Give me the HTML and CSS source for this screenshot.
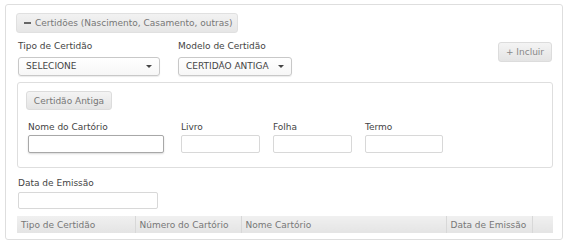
FILE: index.html
```html
<!DOCTYPE html>
<html>
    <head>
        <meta charset="utf-8">
        <title>Certidões</title>
        <link rel="stylesheet" href="styles.css">
    </head>
    <body>
    <div class="panel">
        <div class="legend"><span class="minus"></span>Certidões (Nascimento, Casamento, outras)</div>

        <div class="row1">
            <div class="field f-tipo">
                <label>Tipo de Certidão</label>
                <div class="select">SELECIONE<span class="caret"></span></div>
            </div>
            <div class="field f-modelo">
                <label>Modelo de Certidão</label>
                <div class="select">CERTIDÃO ANTIGA<span class="caret"></span></div>
            </div>
            <button class="btn incluir">+ Incluir</button>
        </div>

        <!--bloco da certidão antiga-->
        <div class="inner">
            <button class="btn tag">Certidão Antiga</button>
            <div class="row2">
                <div class="field f-nome">
                    <label>Nome do Cartório</label>
                    <input type="text" class="focus">
                </div>
                <div class="field f-livro">
                    <label>Livro</label>
                    <input type="text">
                </div>
                <div class="field f-folha">
                    <label>Folha</label>
                    <input type="text">
                </div>
                <div class="field f-termo">
                    <label>Termo</label>
                    <input type="text">
                </div>
            </div>
        </div>

        <div class="field f-data">
            <label>Data de Emissão</label>
            <input type="text">
        </div>

        <table class="grid">
            <tr>
                <th class="c1">Tipo de Certidão</th>
                <th class="c2">Número do Cartório</th>
                <th class="c3">Nome Cartório</th>
                <th class="c4">Data de Emissão</th>
                <th class="c5"></th>
            </tr>
        </table>
    </div>
    </body>
</html>
```

FILE: styles.css
```css
* {
    margin: 0;
    padding: 0;
    box-sizing: border-box;
}
body {
    background: #fff;
    font-family: "DejaVu Sans", Verdana, sans-serif;
    font-size: 9px;
    color: #333;
}
.panel {
    margin: 4px 0 0 5px;
    width: 558px;
    height: 236px;
    border: 1px solid #dedede;
    border-radius: 3px;
    padding: 8px 9px 0 11px;
}
.legend {
    display: inline-block;
    margin-left: -1px;
    height: 20px;
    line-height: 18px;
    padding: 0 7px;
    width: 222px;
    border: 1px solid #e0e0e0;
    border-radius: 3px;
    background: linear-gradient(#f2f2f2, #e6e6e6);
    color: #777;
    white-space: nowrap;
}
.minus {
    display: inline-block;
    width: 7px;
    height: 2px;
    background: #666;
    vertical-align: middle;
    margin: -1px 4px 0 0;
}
label {
    display: block;
    height: 11px;
    line-height: 11px;
    color: #444;
    white-space: nowrap;
}
.row1 {
    display: flex;
    margin-top: 8px;
}
.f-tipo {
    margin-left: 1px;
    width: 142px;
}
.f-modelo {
    margin-left: 18px;
    width: 114px;
}
.select {
    position: relative;
    margin-top: 5px;
    height: 19px;
    line-height: 17px;
    padding-left: 7px;
    border: 1px solid #c8c8c8;
    border-radius: 3px;
    background: linear-gradient(#fff, #f6f6f6);
    box-shadow: 0 1px 1px rgba(0,0,0,0.08);
    color: #444;
    white-space: nowrap;
}
.caret {
    position: absolute;
    right: 7px;
    top: 7px;
    border-left: 3px solid transparent;
    border-right: 3px solid transparent;
    border-top: 3px solid #444;
}
.btn {
    font-family: inherit;
    font-size: 9px;
    border: 1px solid #dcdcdc;
    border-radius: 3px;
    background: linear-gradient(#f4f4f4, #e4e4e4);
    color: #888;
}
.incluir {
    margin: 1px 1px 0 auto;
    width: 54px;
    height: 20px;
    align-self: flex-start;
}
.inner {
    margin-top: 6px;
    height: 86px;
    border: 1px solid #dedede;
    border-radius: 3px;
    padding: 8px 0 0 8px;
}
.tag {
    display: block;
    width: 86px;
    height: 19px;
    color: #777;
}
.row2 {
    display: flex;
    margin-top: 12px;
}
.row2 .field {
    margin-right: 13px;
}
.row2 input {
    margin-top: 2px;
}
input {
    display: block;
    width: 100%;
    height: 18px;
    border: 1px solid #d8d8d8;
    border-radius: 2px;
    background: #fff;
}
input.focus {
    border-color: #a8a8a8;
    box-shadow: 0 1px 2px rgba(0,0,0,0.15);
}
.f-nome {
    margin-left: 2px;
    width: 136px;
}
.row2 .f-nome {
    margin-right: 17px;
}
.f-livro,
.f-folha {
    width: 79px;
}
.f-termo {
    width: 78px;
}
.f-data {
    margin: 10px 0 0 1px;
    width: 140px;
}
.f-data input {
    margin-top: 3px;
    height: 17px;
}
.grid {
    margin-top: 7px;
    width: 536px;
    border-collapse: collapse;
}
.grid th {
    height: 17px;
    padding: 0 4px;
    font-weight: normal;
    text-align: left;
    color: #777;
    background: linear-gradient(#f0f0f0, #e4e4e4);
    border-left: 1px solid #d8d8d8;
    white-space: nowrap;
}
.grid th.c1 {
    border-left: none;
}
.grid .c1 { width: 118px; }
.grid .c2 { width: 106px; }
.grid .c3 { width: 205px; }
.grid .c4 { width: 86px; }
.grid .c5 { width: 21px; }
```
